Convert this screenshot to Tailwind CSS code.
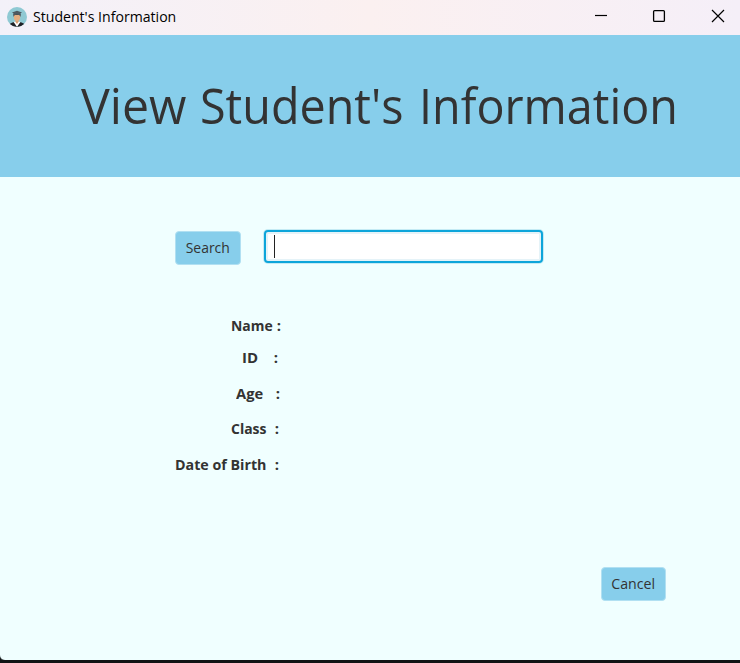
<!DOCTYPE html>
<html lang="en">
<head>
<meta charset="utf-8">
<title>Student's Information</title>
<script src="https://cdn.jsdelivr.net/npm/@tailwindcss/browser@4"></script>
</head>
<body class="bg-[#101314] font-['Open_Sans','Noto_Sans',sans-serif] text-[#333333]">
<div class="flex h-[660px] w-[740px] flex-col overflow-hidden rounded-bl-[5px] bg-[#f0ffff] shadow-[0_1px_0_#4d5657]">
  <header class="flex h-[35px] shrink-0 items-center bg-linear-to-r from-[#f3f1f9] via-[#fbf0f0] via-50% to-[#f5eff8] pl-[7px] text-black">
    <svg class="mt-[-2px] size-5" viewBox="0 0 20 20">
      <defs><clipPath id="avatar"><circle cx="10" cy="10" r="10"/></clipPath></defs>
      <g clip-path="url(#avatar)">
        <rect width="20" height="20" fill="#8fc9d3"/>
        <path d="M2 20V18Q3 16 7.500 15h5Q17 16 18 18v2z" fill="#202126"/>
        <path d="M6.500 14.800 10 20l3.500-5.200z" fill="#fff"/>
        <path d="M8.500 12h3v3L10 17l-1.500-2z" fill="#d99d71"/>
        <ellipse cx="10" cy="10" rx="3.200" ry="4" fill="#e5ad80"/>
        <path d="M6.500 10V7h7v3l-1-2h-5z" fill="#3a302e"/>
        <path d="M5 5.500 10 3.800l5 1.700-1.500 1v2Q10 7 6.500 8.500v-2z" fill="#4e5960"/>
      </g>
    </svg>
    <span class="ml-[6px] mt-[-2px] w-[160px] origin-left scale-x-[0.94] whitespace-nowrap text-[15px]">Student's Information</span>
    <svg class="ml-auto h-[35px] w-[145px]" viewBox="0 0 145 35" fill="none" stroke="#000">
      <path d="M0 15.500h12" stroke-width="1.200"/>
      <rect x="58.600" y="10.600" width="10.800" height="10.800" rx="1" stroke-width="1.300"/>
      <path d="m117 10 12 12m0-12-12 12" stroke-width="1.200"/>
    </svg>
  </header>
  <section class="flex h-[142px] shrink-0 items-center bg-[#87ceeb] pb-[2px] pl-[81px]">
    <h1 class="flex whitespace-nowrap text-[50px] leading-[68px]">
      <span class="w-[119px] origin-left scale-x-[0.965]">View</span>
      <span class="w-[219px] origin-left scale-x-[0.934]">Student's</span>
      <span class="origin-left scale-x-[0.934]">Information</span>
    </h1>
  </section>
  <main class="flex grow flex-col">
    <form class="ml-[175px] mt-[53px] flex h-[34px] items-start">
      <button type="button" class="mt-[1px] flex h-[34px] w-[66px] items-center justify-center rounded-[4px] border border-[#b1e0f2] bg-[#87ceeb] pb-[1px] text-[15px]"><span class="scale-x-[0.93]">Search</span></button>
      <div class="ml-[23px] flex h-[33px] w-[279px] items-center rounded-[4px] border-2 border-[#0da5da] bg-white pl-[8px] shadow-[0_0_0_1px_#c4ebf4,inset_0_0_0_2px_#e5f3f8]"><span class="h-[23px] w-px bg-[#222]"></span></div>
    </form>
    <dl class="mt-[51px] flex flex-col text-[15px] font-bold leading-[20px]">
      <dt class="ml-[231px] flex w-[50px] justify-between whitespace-nowrap"><span class="origin-left scale-x-[0.93]">Name</span><span class="-ml-1">:</span></dt>
      <dt class="ml-[242px] mt-[12px] flex w-[36px] justify-between"><span>ID</span><span>:</span></dt>
      <dt class="ml-[236px] mt-[16px] flex w-[44px] justify-between"><span class="origin-left scale-x-[0.98]">Age</span><span>:</span></dt>
      <dt class="ml-[231px] mt-[15px] flex w-[48px] justify-between"><span class="origin-left scale-x-[0.93]">Class</span><span>:</span></dt>
      <dt class="ml-[175px] mt-[16px] flex w-[104px] justify-between whitespace-nowrap"><span class="origin-left scale-x-[0.95]">Date of Birth</span><span>:</span></dt>
    </dl>
    <button class="ml-[601px] mt-[93px] flex h-[34px] w-[65px] items-center justify-center rounded-[4px] border border-[#b1e0f2] bg-[#87ceeb] pb-[1px] text-[15px]"><span class="scale-x-[0.945]">Cancel</span></button>
  </main>
</div>
</body>
</html>
